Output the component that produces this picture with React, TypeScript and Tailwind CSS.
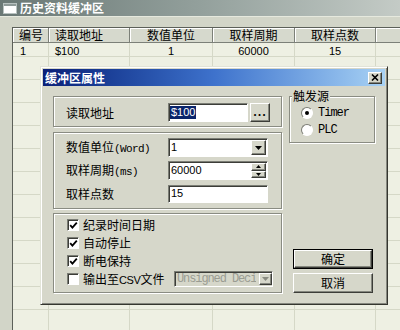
import React from "react";

const CJK = "font-['Noto_Sans_CJK_SC',sans-serif]";
const MONO = "font-['Liberation_Mono','Noto_Sans_CJK_SC',monospace] tracking-[-0.6px] text-[11px]";
const SANS = "font-['Liberation_Sans',sans-serif] text-[11px]";

const sunken =
  "border border-t-[#7b7d75] border-l-[#7b7d75] border-r-white border-b-white shadow-[inset_1px_1px_0_#3c3d38]";
const raised =
  "border border-t-white border-l-white border-r-[#3c3d38] border-b-[#3c3d38] shadow-[inset_-1px_-1px_0_#85877e]";
const etched =
  "border border-[#8a8c82] shadow-[inset_1px_1px_0_#fff,1px_1px_0_#fff]";

function Arrow({ color = "#000" }: { color?: string }) {
  return (
    <svg width="7" height="4" viewBox="0 0 7 4">
      <path d="M0 0H7L3.5 4Z" fill={color} />
    </svg>
  );
}

function Check() {
  return (
    <svg width="9" height="9" viewBox="0 0 9 9">
      <path d="M1.2 4.2L3.4 6.6L7.8 1.6" stroke="#000" strokeWidth="1.8" fill="none" />
    </svg>
  );
}

function CheckBox({ checked, label }: { checked: boolean; label: React.ReactNode }) {
  return (
    <div className="flex items-center gap-[4px] h-[18px]">
      <div className={`w-[12px] h-[12px] bg-white ${sunken} flex items-center justify-center`}>
        {checked ? <Check /> : null}
      </div>
      <span className="text-[12px] leading-none">{label}</span>
    </div>
  );
}

function Radio({ checked, label }: { checked: boolean; label: string }) {
  return (
    <div className="flex items-center gap-[5px] h-[17px]">
      <div className="w-[12px] h-[12px] rounded-full bg-white border border-t-[#7b7d75] border-l-[#7b7d75] border-r-white border-b-white flex items-center justify-center">
        {checked ? <div className="w-[4px] h-[4px] rounded-full bg-black" /> : null}
      </div>
      <span className="font-['Liberation_Mono',monospace] text-[12px] tracking-[-1px] leading-none">{label}</span>
    </div>
  );
}

const cols = "grid grid-cols-[36px_81px_83px_82px_81px_1fr]";

function Row({ h, cells }: { h: string; cells: string[] }) {
  return (
    <div className={`${cols} ${h} border-b border-[#d5d8c7]`}>
      <div className={`border-r border-[#d5d8c7] pl-[7px] flex items-center ${SANS}`}>{cells[0]}</div>
      <div className={`border-r border-[#d5d8c7] pl-[6px] flex items-center ${SANS}`}>{cells[1]}</div>
      <div className={`border-r border-[#d5d8c7] flex items-center justify-center ${SANS}`}>{cells[2]}</div>
      <div className={`border-r border-[#d5d8c7] flex items-center justify-center ${SANS}`}>{cells[3]}</div>
      <div className={`border-r border-[#d5d8c7] flex items-center justify-center ${SANS}`}>{cells[4]}</div>
      <div />
    </div>
  );
}

export default function App() {
  const empty = Array.from({ length: 12 });
  return (
    <div className={`relative w-[400px] h-[330px] overflow-hidden bg-[#d2d5c8] text-black ${CJK} text-[12px]`}>
      {/* window title */}
      <div className="h-[16px] flex items-center gap-[3px] pl-[3px] bg-gradient-to-r from-[#6a7875] via-[#93a09c] to-[#c4cbc6]">
        <div className="w-[14px] h-[11px] bg-white border border-[#b8c2c0] shadow-[inset_0_2px_0_#8e9a98]" />
        <span className="text-white font-bold text-[12px] leading-none">历史资料缓冲区</span>
      </div>
      <div className="h-px bg-[#e6e9de]" />

      {/* list */}
      <div className="ml-[12px] mt-[10px] w-[400px] border-l border-t border-[#5c6059]">
        <div className={`${cols} h-[15px] bg-[#d6d9cd] border-b border-[#7c8078]`}>
          <div className="border-r border-[#7c8078] shadow-[inset_1px_1px_0_#fff] pl-[6px] flex items-center leading-none">编号</div>
          <div className="border-r border-[#7c8078] shadow-[inset_1px_1px_0_#fff] pl-[6px] flex items-center leading-none">读取地址</div>
          <div className="border-r border-[#7c8078] shadow-[inset_1px_1px_0_#fff] flex items-center justify-center leading-none">数值单位</div>
          <div className="border-r border-[#7c8078] shadow-[inset_1px_1px_0_#fff] flex items-center justify-center leading-none">取样周期</div>
          <div className="border-r border-[#7c8078] shadow-[inset_1px_1px_0_#fff] flex items-center justify-center leading-none">取样点数</div>
          <div className="shadow-[inset_1px_1px_0_#fff]" />
        </div>
        <div className="bg-[#eef0e3]">
          <Row h="h-[14px]" cells={["1", "$100", "1", "60000", "15"]} />
          {empty.map((_, i) => (
            <Row key={i} h="h-[23px]" cells={["", "", "", "", ""]} />
          ))}
        </div>
      </div>

      {/* dialog */}
      <div className="absolute left-[40px] top-[66px] w-[348px] h-[239px] bg-[#d6d7ca] border border-t-[#e2e4d8] border-l-[#e2e4d8] border-r-[#35362f] border-b-[#35362f] shadow-[inset_1px_1px_0_#fff,inset_-1px_-1px_0_#85877e] p-[2px] flex flex-col">
        <div className="h-[17px] flex items-center justify-between pl-[2px] pr-[3px] bg-gradient-to-r from-[#0b1f78] via-[#3e72cc] to-[#a8d2f4]">
          <span className="text-white font-bold text-[12px] leading-none">缓冲区属性</span>
          <div className={`w-[14px] h-[12px] bg-[#d6d7ca] ${raised} flex items-center justify-center`}>
            <svg width="8" height="7" viewBox="0 0 8 7">
              <path d="M1 0.5L7 6.5M7 0.5L1 6.5" stroke="#000" strokeWidth="1.6" />
            </svg>
          </div>
        </div>

        <div className="flex-1 flex pl-[10px] pr-[10px] pt-[10px] pb-[9px] gap-[7px]">
          {/* left column */}
          <div className="w-[229px] flex flex-col">
            <div className={`h-[31px] ${etched} pl-[12px] pt-[6px] flex items-start`}>
              <div className="w-[102px] h-[19px] flex items-center leading-none">读取地址</div>
              <div className={`w-[80px] h-[19px] bg-white ${sunken} flex items-center pl-[1px]`}>
                <span className={`${SANS} bg-[#0a246a] text-white leading-[13px] px-[1px]`}>$100</span>
              </div>
              <div className={`ml-[2px] w-[20px] h-[19px] bg-[#d6d7ca] ${raised} flex items-end justify-center pb-[4px] font-bold text-[11px] leading-none tracking-[1px]`}>
                ...
              </div>
            </div>

            <div className={`mt-[5px] h-[77px] ${etched} pl-[12px] pt-[5px] flex flex-col gap-[4px]`}>
              <div className="flex items-center h-[19px]">
                <div className="w-[102px] leading-none">数值单位<span className={MONO}>(Word)</span></div>
                <div className={`w-[100px] h-[19px] bg-white ${sunken} flex items-center justify-between pl-[2px] pr-[1px]`}>
                  <span className={SANS}>1</span>
                  <div className={`w-[15px] h-[15px] bg-[#d6d7ca] ${raised} flex items-center justify-center`}>
                    <Arrow />
                  </div>
                </div>
              </div>
              <div className="flex items-center h-[19px]">
                <div className="w-[102px] leading-none">取样周期<span className={MONO}>(ms)</span></div>
                <div className={`w-[100px] h-[19px] bg-white ${sunken} flex items-center justify-between pl-[2px] pr-[1px]`}>
                  <span className={SANS}>60000</span>
                  <div className="w-[15px] h-[15px] flex flex-col">
                    <div className={`flex-1 bg-[#d6d7ca] ${raised} flex items-center justify-center`}>
                      <svg width="5" height="3" viewBox="0 0 5 3"><path d="M0 3H5L2.5 0Z" fill="#000" /></svg>
                    </div>
                    <div className={`flex-1 bg-[#d6d7ca] ${raised} flex items-center justify-center`}>
                      <svg width="5" height="3" viewBox="0 0 5 3"><path d="M0 0H5L2.5 3Z" fill="#000" /></svg>
                    </div>
                  </div>
                </div>
              </div>
              <div className="flex items-center h-[19px]">
                <div className="w-[102px] leading-none">取样点数</div>
                <div className={`w-[100px] h-[18px] bg-white ${sunken} flex items-center pl-[2px]`}>
                  <span className={SANS}>15</span>
                </div>
              </div>
            </div>

            <div className={`mt-[4px] h-[80px] ${etched} pl-[13px] pt-[2px] flex flex-col`}>
              <CheckBox checked label="纪录时间日期" />
              <CheckBox checked label="自动停止" />
              <CheckBox checked label="断电保持" />
              <div className="flex items-center h-[18px]">
                <div className="w-[107px]">
                  <CheckBox
                    checked={false}
                    label={
                      <>
                        输出至<span className="font-['Liberation_Sans',sans-serif] text-[11px] tracking-[-0.4px]">CSV</span>文件
                      </>
                    }
                  />
                </div>
                <div className={`w-[99px] h-[16px] bg-[#d6d7ca] ${sunken} flex items-center justify-between pl-[2px]`}>
                  <span className="font-['Liberation_Mono',monospace] text-[12px] tracking-[-1.1px] text-[#9a9c92] leading-none whitespace-nowrap overflow-hidden">Unsigned Deci</span>
                  <div className={`w-[13px] h-[12px] shrink-0 bg-[#d6d7ca] ${raised} flex items-center justify-center`}>
                    <Arrow color="#8a8c82" />
                  </div>
                </div>
              </div>
            </div>
          </div>

          {/* right column */}
          <div className="w-[86px] flex flex-col justify-between">
            <div className={`relative h-[47px] ${etched} pl-[11px] pt-[7px] flex flex-col`}>
              <span className="absolute left-[2px] top-[-8px] px-[1px] bg-[#d6d7ca] leading-[14px]">触发源</span>
              <Radio checked label="Timer" />
              <Radio checked={false} label="PLC" />
            </div>
            <div className="flex flex-col gap-[4px] pl-[4px]">
              <div className="w-[80px] h-[20px] border border-black">
                <div className={`w-full h-full bg-[#d6d7ca] ${raised} flex items-center justify-center leading-none`}>确定</div>
              </div>
              <div className={`w-[80px] h-[20px] bg-[#d6d7ca] ${raised} flex items-center justify-center leading-none`}>取消</div>
            </div>
          </div>
        </div>
      </div>
    </div>
  );
}
